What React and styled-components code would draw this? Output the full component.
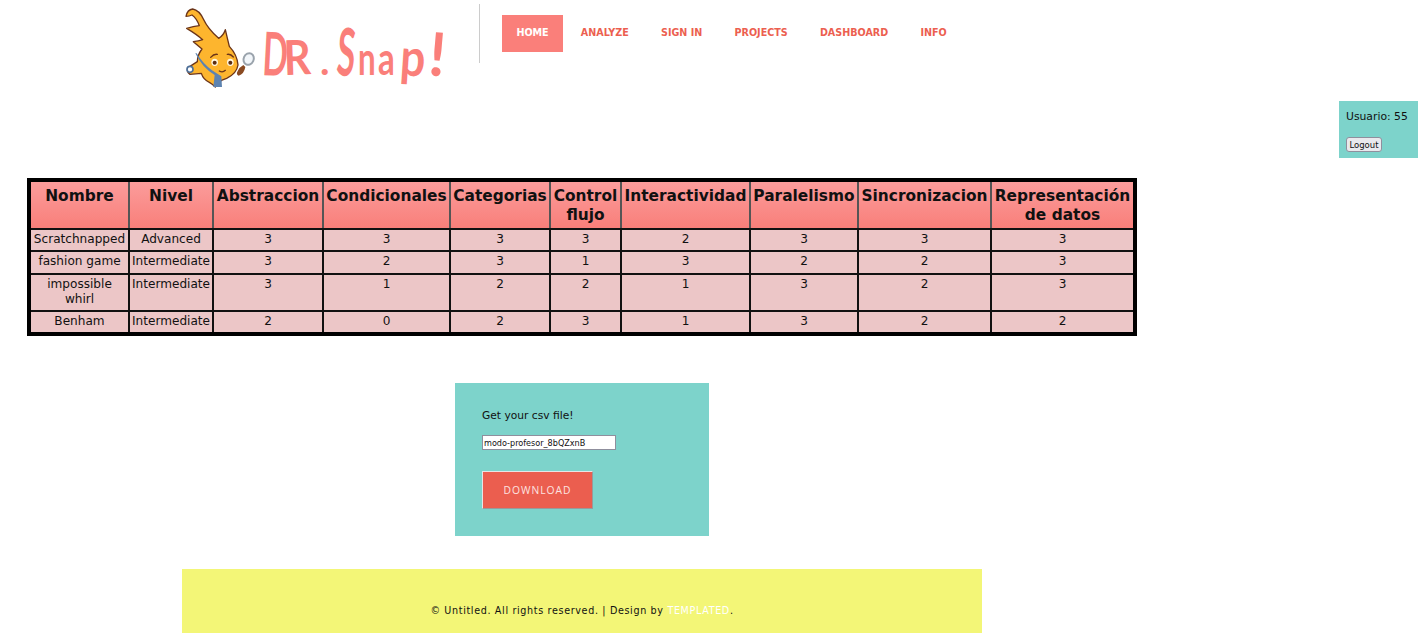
import * as React from 'react';
import styled, { createGlobalStyle } from 'styled-components';

const GlobalStyle = createGlobalStyle`
    html, body {
        margin: 0;
        padding: 0;
        background: #fff;
        color: #111;
        font-family: "DejaVu Sans", sans-serif;
    }
`;

const Page = styled.div`
    width: 1418px;
    height: 633px;
    overflow: hidden;
`;

const Header = styled.header`
    display: flex;
    align-items: flex-start;
    height: 101px;
    margin-left: 182px;
`;

const Logo = styled.div`
    display: flex;
    width: 297px;
    flex: none;
    padding-top: 5px;
`;

const MascotWrap = styled.div`
    flex: none;
    width: 80px;
    height: 85px;
    margin: 0 1px 0 -2px;
`;

const LogoText = styled.div`
    display: flex;
    align-items: baseline;
    height: 75px;
    margin-top: 7px;
    font-family: "Lato", sans-serif;
    font-weight: 700;
    line-height: 75px;
    color: #fa7f7a;
    white-space: nowrap;
`;

const LogoLetter = styled.span`
    display: inline-block;
    width: ${props => props.$width}px;
    font-size: ${props => props.$size}px;
    transform: rotate(${props => props.$tilt || 0}deg) scaleX(${props => props.$squeeze || 1});
    transform-origin: left bottom;
`;

const Divider = styled.div`
    width: 1px;
    height: 59px;
    margin: 4px 22px 0 0;
    background: #ccc;
`;

const Nav = styled.nav`
    display: flex;
    margin-top: 15px;
`;

const NavItem = styled.a`
    display: block;
    height: 37px;
    padding: 0 14.4px;
    margin-right: 3.4px;
    font-size: 9.6px;
    font-weight: bold;
    line-height: 36px;
    color: ${props => (props.$active ? '#fff' : '#ec5f50')};
    background: ${props => (props.$active ? '#fa7f7a' : 'transparent')};
`;

const UserBox = styled.div`
    float: right;
    width: 79px;
    height: 57px;
    padding: 9px 0 0 7px;
    box-sizing: border-box;
    background: #7dd3cb;
    font-size: 10.8px;
`;

const UserName = styled.div`
    line-height: 14px;
    margin-bottom: 13px;
`;

const LogoutButton = styled.button`
    display: block;
    width: 36px;
    height: 15px;
    padding: 0;
    border: 1px solid #8f8f9d;
    border-radius: 3px;
    background: #e9e9ed;
    color: #111;
    font-family: "DejaVu Sans", sans-serif;
    font-size: 8.5px;
    line-height: 12px;
`;

const ScoreTable = styled.table`
    margin: 77px 0 0 27px;
    border-collapse: collapse;
    border: 4px solid #000;
    table-layout: fixed;
    width: 1110px;
`;

const HeadRow = styled.tr`
    height: 49px;
`;

const Row = styled.tr`
    height: ${props => props.$height}px;
`;

const HeadCell = styled.th`
    padding: 5px 0 0;
    vertical-align: top;
    border: 2px solid #111;
    border-color: #111 #555;
    background: linear-gradient(#fb9c9b, #f97f7a);
    font-size: 15.4px;
    line-height: 19px;
    font-weight: bold;
    color: #111;
`;

const Cell = styled.td`
    padding: 2px 0 0;
    vertical-align: top;
    text-align: center;
    border: 2px solid #111;
    background: #ecc6c7;
    font-size: 12.1px;
    line-height: 15px;
`;

const Main = styled.div`
    margin: 47px 0 0 182px;
    width: 800px;
`;

const CsvForm = styled.form`
    box-sizing: border-box;
    width: 254px;
    height: 153px;
    margin: 0 auto 33px;
    padding: 26px 27px 0;
    background: #7dd3cb;
`;

const CsvLabel = styled.div`
    font-size: 10.7px;
    line-height: 13px;
    margin-bottom: 13px;
`;

const CsvInput = styled.input`
    display: block;
    box-sizing: border-box;
    width: 134px;
    height: 15px;
    padding: 0 1px;
    border: 1px solid #8f8f9d;
    background: #fff;
    font-family: "DejaVu Sans", sans-serif;
    font-stretch: condensed;
    font-size: 9px;
    color: #111;
`;

const DownloadButton = styled.button`
    display: block;
    box-sizing: border-box;
    width: 111px;
    height: 38px;
    margin-top: 21px;
    border: 1px solid;
    border-color: #e6e6e6 #999 #999 #e6e6e6;
    background: #eb5e4f;
    color: #fde3e0;
    font-family: "Open Sans", sans-serif;
    font-size: 10.3px;
    letter-spacing: 1px;
`;

const Footer = styled.footer`
    height: 64px;
    padding-top: 35px;
    box-sizing: border-box;
    background: #f3f677;
    text-align: center;
    font-size: 9.6px;
    line-height: 13px;
    letter-spacing: 0.65px;
    color: #111;
`;

const FooterLink = styled.a`
    color: #fff;
`;

const navItems = ['HOME', 'ANALYZE', 'SIGN IN', 'PROJECTS', 'DASHBOARD', 'INFO'];

const logoLetters = [
    { ch: 'D', size: 60, width: 24, squeeze: 0.55, tilt: 3 },
    { ch: 'R', size: 48, width: 35, squeeze: 0.88, tilt: -2 },
    { ch: '.', size: 40, width: 15 },
    { ch: 'S', size: 66, width: 23, squeeze: 0.5, tilt: 4 },
    { ch: 'n', size: 46, width: 20, squeeze: 0.68 },
    { ch: 'a', size: 46, width: 20, squeeze: 0.72 },
    { ch: 'p', size: 52, width: 28, squeeze: 0.85, tilt: 4 },
    { ch: '!', size: 60, width: 12, tilt: 5 },
];

const columns = [
    { name: 'Nombre', width: 100 },
    { name: 'Nivel', width: 84 },
    { name: 'Abstraccion', width: 110 },
    { name: 'Condicionales', width: 127 },
    { name: 'Categorias', width: 100 },
    { name: 'Control flujo', width: 71 },
    { name: 'Interactividad', width: 129 },
    { name: 'Paralelismo', width: 108 },
    { name: 'Sincronizacion', width: 133 },
    { name: 'Representación de datos', width: 144 },
];

const rows = [
    { height: 22, cells: ['Scratchnapped', 'Advanced', 3, 3, 3, 3, 2, 3, 3, 3] },
    { height: 23, cells: ['fashion game', 'Intermediate', 3, 2, 3, 1, 3, 2, 2, 3] },
    { height: 37, cells: ['impossible whirl', 'Intermediate', 3, 1, 2, 2, 1, 3, 2, 3] },
    { height: 23, cells: ['Benham', 'Intermediate', 2, 0, 2, 3, 1, 3, 2, 2] },
];

function Mascot() {
    return (
        <svg width="80" height="85" viewBox="0 0 240 255">
            <path
                d="M18 34 Q22 14 38 12 Q58 16 70 42 Q84 72 116 100 Q130 92 136 74 Q142 100 148 124 Q172 150 174 180 Q170 206 140 220 L124 226 Q116 238 106 246 Q96 236 88 232 Q70 224 64 205 L30 208 Q18 200 24 188 L52 170 Q52 150 66 132 L40 110 Q56 108 68 104 Q50 88 20 70 Q40 64 58 62 Q50 40 36 30 Q28 34 18 34 Z"
                fill="#fdb52e"
                stroke="#6b3418"
                strokeWidth="4"
                strokeLinejoin="round"
            />
            <path d="M46 145 Q68 190 104 210 L100 246 L126 246 L124 214 Q108 204 96 196 Q68 175 50 145 Z" fill="#5d83b0" />
            <circle cx="30" cy="193" r="9" fill="#fff" stroke="#4d6f98" strokeWidth="5" />
            <ellipse cx="104" cy="172" rx="10" ry="11" fill="#fff6dd" />
            <circle cx="104" cy="173" r="6" fill="#5a2c12" />
            <ellipse cx="151" cy="172" rx="10" ry="11" fill="#fff6dd" />
            <circle cx="151" cy="173" r="6" fill="#5a2c12" />
            <path d="M92 157 Q102 146 112 148 M142 148 Q152 146 160 156" fill="none" stroke="#6b3418" strokeWidth="4" strokeLinecap="round" />
            <path d="M118 198 Q128 204 136 196" fill="none" stroke="#6b3418" strokeWidth="4" strokeLinecap="round" />
            <path d="M172 200 Q178 186 190 180 L196 186 Q192 208 176 212 Q168 208 172 200 Z" fill="#8a4a22" />
            <ellipse cx="206" cy="162" rx="15" ry="18" transform="rotate(25 206 162)" fill="#f2f6fa" stroke="#9aa3ac" strokeWidth="6" />
        </svg>
    );
}

export default function App() {
    return (
        <Page>
            <GlobalStyle />
            <Header>
                <Logo>
                    <MascotWrap>
                        <Mascot />
                    </MascotWrap>
                    <LogoText>
                        {logoLetters.map((l, i) => (
                            <LogoLetter key={i} $size={l.size} $width={l.width} $squeeze={l.squeeze} $tilt={l.tilt}>{l.ch}</LogoLetter>
                        ))}
                    </LogoText>
                </Logo>
                <Divider />
                <Nav>
                    {navItems.map((item, i) => (
                        <NavItem key={item} $active={i === 0}>{item}</NavItem>
                    ))}
                </Nav>
            </Header>
            <UserBox>
                <UserName>Usuario: 55</UserName>
                <LogoutButton type="button">Logout</LogoutButton>
            </UserBox>
            <ScoreTable>
                <colgroup>
                    {columns.map(col => <col key={col.name} width={col.width} />)}
                </colgroup>
                <thead>
                    <HeadRow>
                        {columns.map(col => <HeadCell key={col.name}>{col.name}</HeadCell>)}
                    </HeadRow>
                </thead>
                <tbody>
                    {rows.map(row => (
                        <Row key={row.cells[0]} $height={row.height}>
                            {row.cells.map((value, i) => <Cell key={i}>{value}</Cell>)}
                        </Row>
                    ))}
                </tbody>
            </ScoreTable>
            <Main>
                <CsvForm>
                    <CsvLabel>Get your csv file!</CsvLabel>
                    <CsvInput readOnly value="modo-profesor_8bQZxnB" />
                    <DownloadButton type="button">DOWNLOAD</DownloadButton>
                </CsvForm>
                <Footer>
                    © Untitled. All rights reserved. | Design by <FooterLink>TEMPLATED</FooterLink>.
                </Footer>
            </Main>
        </Page>
    );
}
